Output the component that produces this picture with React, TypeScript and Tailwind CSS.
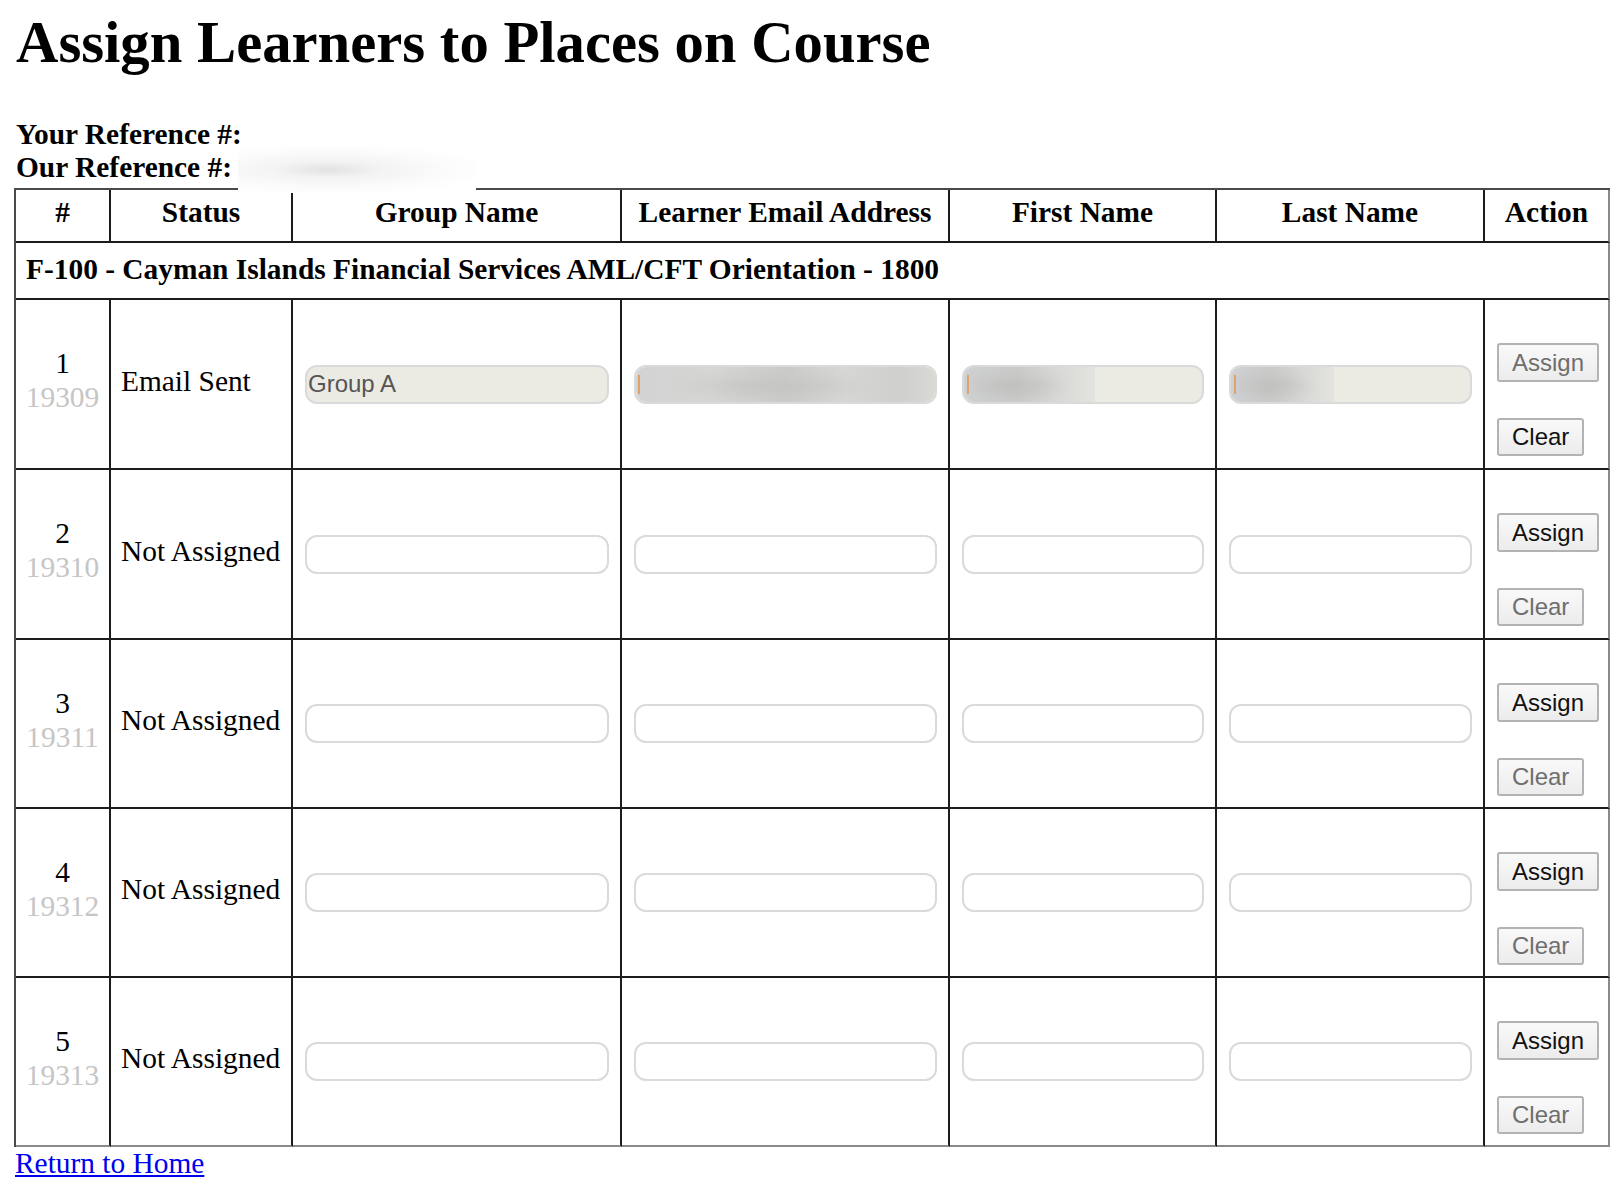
import React from "react";

type Row = { n: number; id: number; status: string; filled?: boolean };

const rows: Row[] = [
  { n: 1, id: 19309, status: "Email Sent", filled: true },
  { n: 2, id: 19310, status: "Not Assigned" },
  { n: 3, id: 19311, status: "Not Assigned" },
  { n: 4, id: 19312, status: "Not Assigned" },
  { n: 5, id: 19313, status: "Not Assigned" },
];

const headers = ["#", "Status", "Group Name", "Learner Email Address", "First Name", "Last Name", "Action"];

function EmptyInput() {
  return (
    <input
      type="text"
      className="h-[39px] w-full rounded-[12px] border-2 border-[#dadada] bg-white px-[2px] font-['Liberation_Sans',Arial,sans-serif] text-[24px] text-black outline-none"
    />
  );
}

function Btn({ label, disabled, tall }: { label: string; disabled?: boolean; tall?: boolean }) {
  return (
    <button
      type="button"
      className={
        (tall ? "h-[39px] " : "h-[38px] ") +
        (disabled ? "text-[#6e6e6e] " : "text-[#111111] ") +
        "rounded-[3px] border-2 border-[#b3b3b3] bg-gradient-to-b from-[#f9f9f9] to-[#ececec] px-[13px] font-['Liberation_Sans',Arial,sans-serif] text-[24px] leading-none"
      }
    >
      {label}
    </button>
  );
}

function BlurredField({ fill }: { fill: "email" | "first" | "last" }) {
  return (
    <div className="flex h-[39px] w-full items-stretch overflow-hidden rounded-[12px] border-2 border-[#dadada] bg-[#ebebe4]">
      {fill === "email" && (
        <span className="flex flex-1 items-center bg-[linear-gradient(90deg,#d2d3d3_0%,#d6d6d4_25%,#cbcbc9_50%,#d7d7d5_70%,#cfcfcd_88%,#d9d9d6_100%)]">
          <span className="ml-[2px] h-[19px] w-[2px] bg-[#dfa36a]" />
          <span className="h-full flex-1 bg-[radial-gradient(ellipse_at_45%_55%,#c3c3c1_0%,transparent_45%)] blur-[4px]" />
        </span>
      )}
      {fill === "first" && (
        <span className="flex w-[131px] items-center bg-[linear-gradient(90deg,#cfd1d3_0%,#cacac8_40%,#d8d8d6_70%,#e3e3df_100%)]">
          <span className="ml-[3px] h-[19px] w-[2px] bg-[#dfa36a]" />
          <span className="h-full flex-1 bg-[radial-gradient(ellipse_at_35%_55%,#bfbfbd_0%,transparent_50%)] blur-[4px]" />
        </span>
      )}
      {fill === "last" && (
        <span className="flex w-[103px] items-center bg-[linear-gradient(90deg,#cfd1d3_0%,#cacac8_40%,#d8d8d6_70%,#e3e3df_100%)]">
          <span className="ml-[3px] h-[19px] w-[2px] bg-[#dfa36a]" />
          <span className="h-full flex-1 bg-[radial-gradient(ellipse_at_35%_55%,#bfbfbd_0%,transparent_50%)] blur-[4px]" />
        </span>
      )}
    </div>
  );
}

export default function App() {
  const cell = "border-r-2 border-b-2 border-[#1c1c1c]";
  return (
    <div className="min-h-screen bg-white pl-[14px] pt-[14px] font-['Liberation_Serif','Times_New_Roman',serif] text-[29.4px] text-black">
      <h1 className="pl-[2px] text-[58.7px] font-bold leading-[58px]">Assign Learners to Places on Course</h1>

      <div className="mt-[46px] pl-[2px] font-bold leading-[33px]">
        <div>Your Reference #:</div>
        <div className="relative">
          Our Reference #:
          <span className="absolute left-[222px] top-[-5px] z-10 h-[47px] w-[238px] bg-[radial-gradient(ellipse_at_38%_50%,#e2e2e2_0%,#f3f3f3_25%,#fbfbfb_55%,#ffffff_80%)]" />
        </div>
      </div>

      <div className="mt-[4px] grid w-[1596px] grid-cols-[95px_182px_329px_328px_267px_268px_125px] grid-rows-[53px_57px_170px_170px_169px_169px_169px] border-l-2 border-t-2 border-l-[#4a4a4a] border-t-[#4a4a4a]">
        {headers.map((h, i) => (
          <div
            key={h}
            className={
              cell +
              (i === 6 ? " border-r-[#8a8a8a]" : "") +
              " flex items-center justify-center pb-[6px] font-bold leading-[33px]"
            }
          >
            {h}
          </div>
        ))}

        <div className={cell + " col-span-7 flex items-center border-r-[#8a8a8a] pb-[2px] pl-[10px] font-bold leading-[33px]"}>
          F-100 - Cayman Islands Financial Services AML/CFT Orientation - 1800
        </div>

        {rows.map((r, ri) => {
          const last = ri === rows.length - 1;
          const c = cell + (last ? " border-b-[#8a8a8a]" : "");
          return (
            <React.Fragment key={r.n}>
              <div className={c + " flex flex-col items-center justify-center pb-[8px] leading-[34px]"}>
                <span>{r.n}</span>
                <span className="text-[#c6c6c6]">{r.id}</span>
              </div>
              <div className={c + " flex items-center pb-[6px] pl-[10px] leading-[33px]"}>{r.status}</div>

              <div className={c + " flex items-center pl-[12px] pr-[11px]"}>
                {r.filled ? (
                  <input
                    type="text"
                    disabled
                    value="Group A"
                    readOnly
                    className="h-[39px] w-full rounded-[12px] border-2 border-[#dadada] bg-[#ebebe4] px-[1px] font-['Liberation_Sans',Arial,sans-serif] text-[24px] text-[#555555]"
                  />
                ) : (
                  <EmptyInput />
                )}
              </div>

              <div className={c + " flex items-center pl-[12px] pr-[11px]"}>
                {r.filled ? <BlurredField fill="email" /> : <EmptyInput />}
              </div>

              <div className={c + " flex items-center pl-[12px] pr-[11px]"}>
                {r.filled ? <BlurredField fill="first" /> : <EmptyInput />}
              </div>

              <div className={c + " flex items-center pl-[12px] pr-[11px]"}>
                {r.filled ? <BlurredField fill="last" /> : <EmptyInput />}
              </div>

              <div className={c + " flex flex-col items-start gap-[36px] border-r-[#8a8a8a] pl-[12px] pt-[43px]"}>
                <Btn label="Assign" tall disabled={r.filled} />
                <Btn label="Clear" disabled={!r.filled} />
              </div>
            </React.Fragment>
          );
        })}
      </div>

      <a href="#" className="block w-fit pl-[1px] leading-[33px] text-[#0000ee] underline">
        Return to Home
      </a>
    </div>
  );
}
